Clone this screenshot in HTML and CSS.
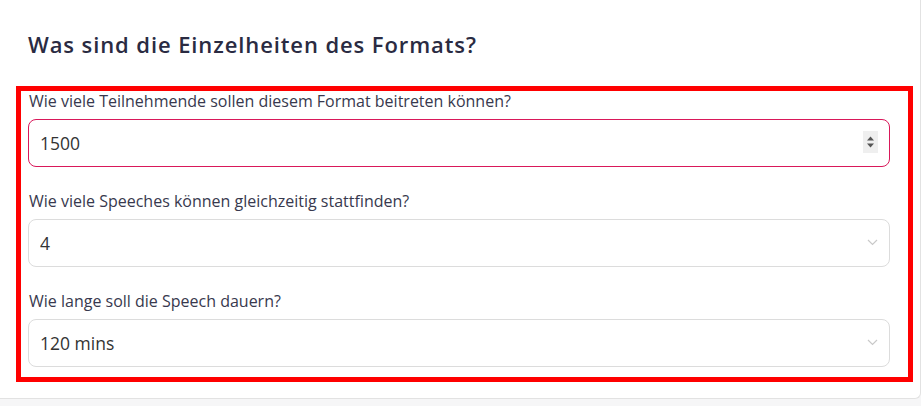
FILE: index.html
```html
<!DOCTYPE html>
<html lang="de">
<head>
  <meta charset="UTF-8" />
  <title>Format</title>
  <meta name="viewport" content="width=device-width, initial-scale=1" />
  <link rel="stylesheet" href="styles.css">
</head>
<body>

<section class="card">
  <h2>Was sind die Einzelheiten des Formats?</h2>

  <div class="fields">
    <div class="field">
      <label for="participants">Wie viele Teilnehmende sollen diesem Format beitreten können?</label>
      <div class="control">
        <input id="participants" class="input active" type="text" value="1500" />
        <span class="spinner">
          <svg width="15" height="22" viewBox="0 0 15 22">
            <path d="M4 9.5 L7.5 5.5 L11 9.5 Z" fill="#555" />
            <path d="M4 12.5 L7.5 16.5 L11 12.5 Z" fill="#555" />
          </svg>
        </span>
      </div>
    </div>

    <div class="field">
      <label for="speeches">Wie viele Speeches können gleichzeitig stattfinden?</label>
      <div class="control">
        <select id="speeches" class="input">
          <option>4</option>
        </select>
        <svg class="chevron" width="11" height="7" viewBox="0 0 11 7">
          <path d="M1 1 L5.5 5.5 L10 1" fill="none" stroke="#c9c9c9" stroke-width="1.2" />
        </svg>
      </div>
    </div>

    <div class="field">
      <label for="duration">Wie lange soll die Speech dauern?</label>
      <div class="control">
        <select id="duration" class="input">
          <option>120 mins</option>
        </select>
        <svg class="chevron" width="11" height="7" viewBox="0 0 11 7">
          <path d="M1 1 L5.5 5.5 L10 1" fill="none" stroke="#c9c9c9" stroke-width="1.2" />
        </svg>
      </div>
    </div>
  </div>
</section>

</body>
</html>
```

FILE: styles.css
```css
body {
  font-family: 'Open Sans', 'Liberation Sans', sans-serif;
  margin: 0;
  background-color: #f6f6f7;
  color: #333;
}
.card {
  width: 921px;
  box-sizing: border-box;
  background: white;
  padding: 30px 7px 16px 16px;
  border-right: 1px solid #e2e2e2;
  border-bottom: 1px solid #e2e2e2;
  border-bottom-right-radius: 6px;
}
.card h2 {
  margin: 0 0 28px 12px;
  font-size: 22px;
  line-height: 28px;
  font-weight: 600;
  letter-spacing: 0.9px;
  color: #2a2b42;
}
.fields {
  border: 5px solid #ff0000;
  padding: 0 18px 10px 7px;
}
.field + .field {
  margin-top: 24px;
}
.field label {
  display: block;
  font-size: 16px;
  line-height: 21px;
  color: #38394e;
  margin: 0 0 7px 1px;
}
.control {
  position: relative;
}
.input {
  display: block;
  width: 100%;
  height: 48px;
  box-sizing: border-box;
  padding: 0 11px;
  border: 1px solid #dcdcdc;
  border-radius: 8px;
  background: white;
  font-family: inherit;
  font-size: 17.5px;
  color: #333;
  outline: none;
  appearance: none;
  -webkit-appearance: none;
}
.input.active {
  border-color: #d9185a;
}
.spinner {
  position: absolute;
  top: 12px;
  right: 12px;
  width: 15px;
  height: 22px;
  background: #efefef;
}
.spinner svg {
  display: block;
}
.chevron {
  position: absolute;
  top: 20px;
  right: 12px;
}
```
